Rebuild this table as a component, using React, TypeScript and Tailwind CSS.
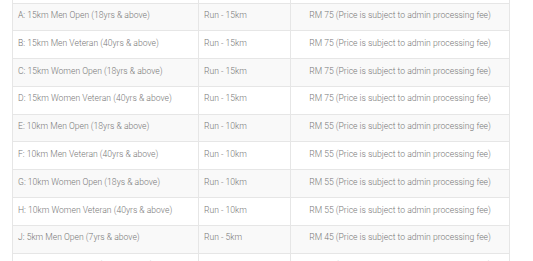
import React from 'react';

interface Category {
  name: string;
  type: string;
  price: string;
}

const categories: Category[] = [
  { name: 'A: 15km Men Open (18yrs & above)', type: 'Run - 15km', price: 'RM 75 (Price is subject to admin processing fee)' },
  { name: 'B: 15km Men Veteran (40yrs & above)', type: 'Run - 15km', price: 'RM 75 (Price is subject to admin processing fee)' },
  { name: 'C: 15km Women Open (18yrs & above)', type: 'Run - 15km', price: 'RM 75 (Price is subject to admin processing fee)' },
  { name: 'D: 15km Women Veteran (40yrs & above)', type: 'Run - 15km', price: 'RM 75 (Price is subject to admin processing fee)' },
  { name: 'E: 10km Men Open (18yrs & above)', type: 'Run - 10km', price: 'RM 55 (Price is subject to admin processing fee)' },
  { name: 'F: 10km Men Veteran (40yrs & above)', type: 'Run - 10km', price: 'RM 55 (Price is subject to admin processing fee)' },
  { name: 'G: 10km Women Open (18ys & above)', type: 'Run - 10km', price: 'RM 55 (Price is subject to admin processing fee)' },
  { name: 'H: 10km Women Veteran (40yrs & above)', type: 'Run - 10km', price: 'RM 55 (Price is subject to admin processing fee)' },
  { name: 'J: 5km Men Open (7yrs & above)', type: 'Run - 5km', price: 'RM 45 (Price is subject to admin processing fee)' },
  { name: 'K: 5km Women Open (7yrs & above)', type: 'Run - 5km', price: 'RM 45 (Price is subject to admin processing fee)' },
];

const cell = 'border border-[#e6e6e6] align-top h-[27.8px] pt-[5.5px] px-[5px] leading-[12.6px]';

const App = () => {
  return (
    <div className="w-[533px] h-[261px] overflow-hidden bg-white font-['Roboto',sans-serif] font-light text-[8.6px] text-[#777]">
      <div className="pl-[12px]">
        <table className="w-[497px] border-collapse table-fixed">
          <colgroup>
            <col className="w-[186px]" />
            <col className="w-[92px]" />
            <col className="w-[219px]" />
          </colgroup>
          <tbody>
            {/* bottom edge of the row above, scrolled out of view */}
            <tr className="bg-white">
              <td className="border border-[#e6e6e6] border-t-0 h-[3px] p-0" />
              <td className="border border-[#e6e6e6] border-t-0 h-[3px] p-0" />
              <td className="border border-[#e6e6e6] border-t-0 h-[3px] p-0" />
            </tr>
            {categories.map((c, i) => (
              <tr key={c.name} className={i % 2 === 0 ? 'bg-[#f9f9f9]' : 'bg-white'}>
                <td className={cell}>{c.name}</td>
                <td className={cell}>{c.type}</td>
                <td className={`${cell} text-center`}>{c.price}</td>
              </tr>
            ))}
          </tbody>
        </table>
      </div>
    </div>
  );
};

export default App;
